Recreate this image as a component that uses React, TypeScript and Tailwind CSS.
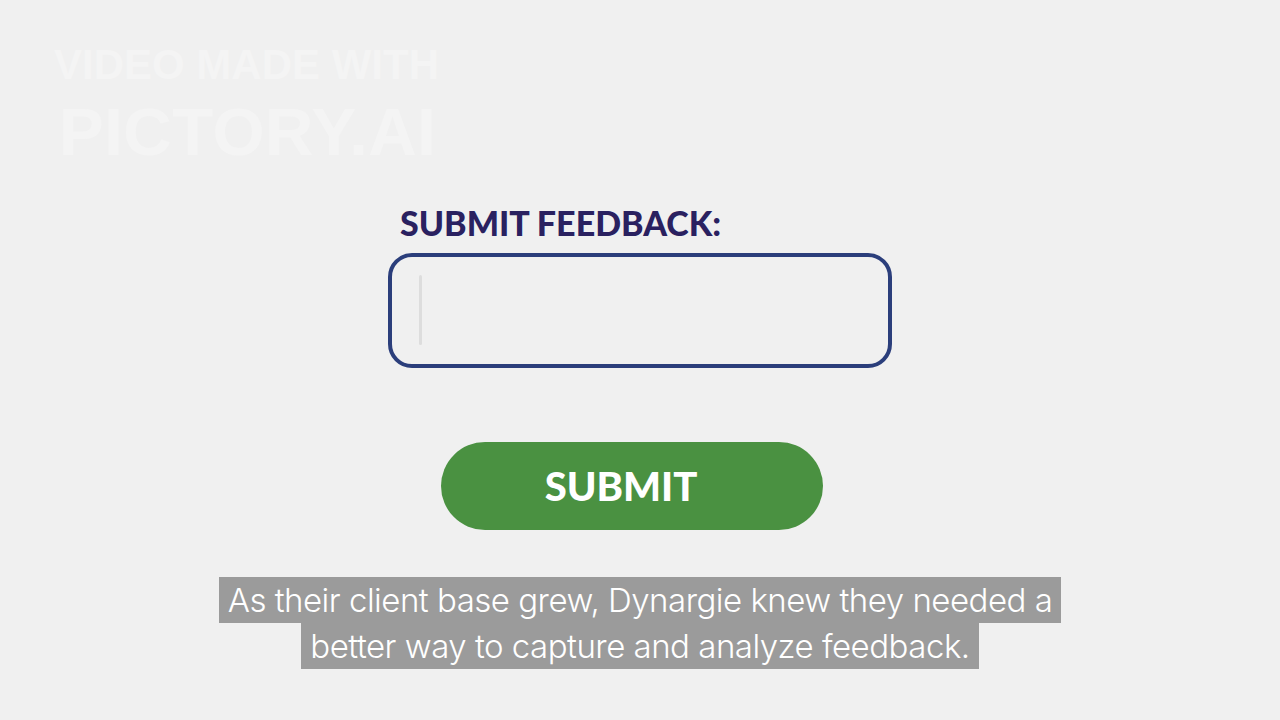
export default function App() {
  return (
    <main className="relative h-[720px] w-[1280px] overflow-hidden bg-[#f0f0f0] font-['Lato',sans-serif]">
      {/* watermark */}
      <div className="absolute left-[54px] top-[44px] select-none font-['Liberation_Sans',sans-serif] font-bold uppercase leading-none text-[#f4f4f4]">
        <div className="text-[42px] tracking-[0px]">Video made with</div>
        <div className="mt-[12px] pl-[5px] text-[67px] tracking-[0.5px]">Pictory.ai</div>
      </div>

      <section className="flex flex-col items-center pt-[206px]">
        <div className="w-[504px]">
          <h1 className="pl-[12px] text-[34px] font-black leading-none tracking-[0px] text-[#2a2160]">
            SUBMIT FEEDBACK:
          </h1>
          <div className="mt-[13px] h-[115px] rounded-[24px] border-[4px] border-[#2b3e7b] bg-[#f0f0f0]">
            <div className="ml-[27px] mt-[18px] h-[70px] w-[3px] rounded bg-[#dddddd]" />
          </div>
          <button
            type="button"
            className="ml-[53px] mt-[74px] flex h-[88px] w-[382px] items-center justify-center rounded-full bg-[#4a9141] pr-[22px] text-[40px] font-black leading-none tracking-[0px] text-white"
          >
            SUBMIT
          </button>
        </div>
      </section>

      {/* caption */}
      <div className="absolute left-0 right-0 top-[577px] flex flex-col items-center font-['Inter',sans-serif] text-[33px] font-light leading-[46px] tracking-[-0.5px] text-white">
        <span className="bg-[#9b9b9b] px-[9px]">As their client base grew, Dynargie knew they needed a</span>
        <span className="bg-[#9b9b9b] px-[9px]">better way to capture and analyze feedback.</span>
      </div>
    </main>
  );
}
